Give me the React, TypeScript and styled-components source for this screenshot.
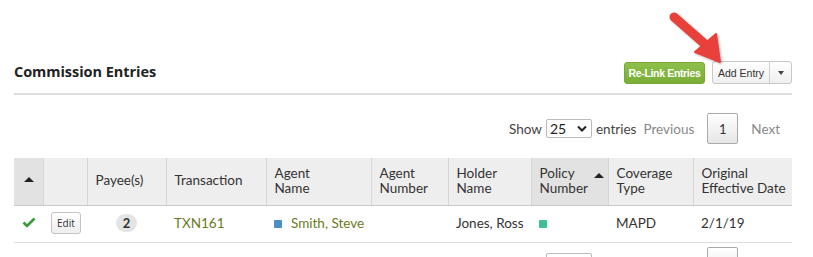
import styled, { createGlobalStyle } from 'styled-components';

const GlobalStyle = createGlobalStyle`
  html, body {
    margin: 0;
    padding: 0;
    background: #fff;
    font-family: Lato, 'Open Sans', sans-serif;
    color: #333;
    overflow: hidden;
  }
`;

const COLUMNS = [
  { key: 'status', label: '', width: 29, sorted: true, arrow: 'center' },
  { key: 'edit', label: '', width: 44 },
  { key: 'payee', label: 'Payee(s)', width: 79 },
  { key: 'txn', label: 'Transaction', width: 100 },
  { key: 'agentName', label: 'Agent\nName', width: 105 },
  { key: 'agentNum', label: 'Agent\nNumber', width: 77 },
  { key: 'holder', label: 'Holder\nName', width: 83 },
  { key: 'policy', label: 'Policy\nNumber', width: 77, sorted: true, arrow: 'right' },
  { key: 'coverage', label: 'Coverage\nType', width: 85 },
  { key: 'date', label: 'Original\nEffective Date', width: 99 },
];

const Page = styled.div`
  position: relative;
  width: 778px;
  padding: 61px 0 0 14px;
  height: 196px;
`;

const Header = styled.div`
  display: flex;
  align-items: center;
  justify-content: space-between;
  padding-bottom: 9px;
  border-bottom: 2px solid #ddd;
`;

const Title = styled.h2`
  margin: 0 0 2px;
  font-family: 'Open Sans', sans-serif;
  font-size: 14.5px;
  font-weight: 700;
  color: #222;
  letter-spacing: -0.05px;
`;

const Actions = styled.div`
  display: flex;
  align-items: center;
  gap: 7px;
`;

const GreenButton = styled.button`
  width: 81px;
  height: 22px;
  padding: 0;
  border: 1px solid #76a832;
  border-radius: 3px;
  background: linear-gradient(#8dbf4a, #7aae37);
  color: #fff;
  font-family: 'Liberation Sans', Arial, sans-serif;
  font-size: 10.5px;
  font-weight: 700;
  letter-spacing: -0.35px;
`;

const SplitButton = styled.div`
  display: flex;
  height: 23px;
  border: 1px solid #c8c8c8;
  border-radius: 3px;
  background: linear-gradient(#fff, #f0f0f0);
  box-sizing: border-box;
`;

const SplitMain = styled.button`
  width: 57px;
  border: 0;
  background: transparent;
  padding: 0;
  font-family: 'Liberation Sans', Arial, sans-serif;
  font-size: 10.5px;
  color: #333;
  border-right: 1px solid #d0d0d0;
`;

const SplitCaret = styled.button`
  width: 21px;
  border: 0;
  background: transparent;
  display: flex;
  align-items: center;
  justify-content: center;
  padding: 0;
`;

const Caret = styled.span`
  width: 0;
  height: 0;
  border-left: 3.5px solid transparent;
  border-right: 3.5px solid transparent;
  border-top: 4px solid #444;
`;

const Pager = styled.div<{ $top: number }>`
  display: flex;
  align-items: center;
  justify-content: flex-end;
  margin-top: ${p => p.$top}px;
  padding-right: 12px;
  font-family: Lato, sans-serif;
  font-size: 13.5px;
  color: #555;
  height: 31px;
`;

const LengthLabel = styled.label`
  display: flex;
  align-items: center;
  gap: 4px;
  margin-right: 7px;
  color: #444;
`;

const Select = styled.div`
  display: flex;
  align-items: center;
  justify-content: space-between;
  width: 46px;
  height: 19px;
  box-sizing: border-box;
  padding: 0 4px 0 3px;
  border: 1px solid #bbb;
  border-radius: 2px;
  font-size: 14px;
  color: #222;
`;

const PageLink = styled.span`
  color: #888;
  font-size: 13.5px;
`;

const PageBox = styled.span`
  display: flex;
  align-items: center;
  justify-content: center;
  width: 31px;
  height: 31px;
  box-sizing: border-box;
  margin: 0 13px 0 13px;
  border: 1px solid #aaa;
  border-radius: 2px;
  background: linear-gradient(#fff, #e6e6e6);
  color: #333;
  font-size: 13px;
`;

const Table = styled.table`
  border-collapse: collapse;
  table-layout: fixed;
  width: 778px;
  margin-top: 14px;
  font-family: Lato, 'Open Sans', sans-serif;
  font-size: 13.5px;
`;

const Th = styled.th<{ $sorted?: boolean }>`
  position: relative;
  height: 45px;
  padding: 0 2px 2px 8px;
  text-align: left;
  vertical-align: middle;
  font-weight: 400;
  line-height: 15px;
  color: #333;
  white-space: pre;
  overflow: hidden;
  background: ${p => (p.$sorted ? '#e2e2e2' : '#eeeeee')};
  border-left: 1px solid #d6d6d6;
  border-bottom: 1px solid #c8c8c8;
  &:first-child {
    border-left: 0;
  }
`;

const SortArrow = styled.span<{ $align: string }>`
  position: absolute;
  top: ${p => (p.$align === 'center' ? '19px' : '15px')};
  ${p => (p.$align === 'center' ? 'left: 10px;' : 'right: 4px;')}
  width: 0;
  height: 0;
  border-left: 5px solid transparent;
  border-right: 5px solid transparent;
  border-bottom: 5px solid #222;
`;

const Td = styled.td<{ $center?: boolean }>`
  height: 33px;
  padding: 0 8px 3px;
  text-align: ${p => (p.$center ? 'center' : 'left')};
  border-bottom: 1px solid #ddd;
  color: #333;
  white-space: nowrap;
`;

const EditButton = styled.button`
  height: 22px;
  padding: 0 5px;
  border: 1px solid #c4c4c4;
  border-radius: 3px;
  background: linear-gradient(#fff, #eee);
  font-family: 'Open Sans', sans-serif;
  font-size: 10px;
  color: #333;
`;

const Badge = styled.span`
  display: inline-flex;
  align-items: center;
  justify-content: center;
  width: 21px;
  height: 18px;
  border-radius: 9px;
  background: #e4e4e4;
  font-weight: 700;
  font-size: 13px;
  color: #333;
`;

const LinkText = styled.span`
  color: #6a7a22;
`;

const Swatch = styled.span<{ $color: string }>`
  display: inline-block;
  width: 8px;
  height: 8px;
  margin-right: 9px;
  border-radius: 1px;
  background: ${p => p.$color};
  vertical-align: 0;
`;

const Callout = styled.svg`
  position: absolute;
  left: 660px;
  top: 7px;
  pointer-events: none;
`;

const PagerRow = ({ top }: { top: number }) => (
  <Pager $top={top}>
    <LengthLabel>
      Show
      <Select>
        25
        <svg width="10" height="7" viewBox="0 0 10 7">
          <path d="M1 1.5 L5 5.5 L9 1.5" stroke="#222" strokeWidth="2" fill="none" />
        </svg>
      </Select>
      entries
    </LengthLabel>
    <PageLink>Previous</PageLink>
    <PageBox>1</PageBox>
    <PageLink>Next</PageLink>
  </Pager>
);

export default function App() {
  return (
    <Page>
      <GlobalStyle />
      <Header>
        <Title>Commission Entries</Title>
        <Actions>
          <GreenButton>Re-Link Entries</GreenButton>
          <SplitButton>
            <SplitMain>Add Entry</SplitMain>
            <SplitCaret>
              <Caret />
            </SplitCaret>
          </SplitButton>
        </Actions>
      </Header>

      <PagerRow top={18} />

      <Table>
        <colgroup>
          {COLUMNS.map(c => (
            <col key={c.key} style={{ width: c.width }} />
          ))}
        </colgroup>
        <thead>
          <tr>
            {COLUMNS.map(c => (
              <Th key={c.key} $sorted={c.sorted}>
                {c.label}
                {c.arrow && <SortArrow $align={c.arrow} />}
              </Th>
            ))}
          </tr>
        </thead>
        <tbody>
          <tr>
            <Td $center>
              <svg width="14" height="11" viewBox="0 0 14 11">
                <path d="M1.5 5.5 L5 9 L12.5 1.5" stroke="#3a9a3a" strokeWidth="2.6" fill="none" />
              </svg>
            </Td>
            <Td>
              <EditButton>Edit</EditButton>
            </Td>
            <Td $center>
              <Badge>2</Badge>
            </Td>
            <Td>
              <LinkText>TXN161</LinkText>
            </Td>
            <Td>
              <Swatch $color="#4a90c8" />
              <LinkText>Smith, Steve</LinkText>
            </Td>
            <Td />
            <Td>Jones, Ross</Td>
            <Td>
              <Swatch $color="#3fbf96" />
            </Td>
            <Td>MAPD</Td>
            <Td>2/1/19</Td>
          </tr>
        </tbody>
      </Table>

      <PagerRow top={4} />

      <Callout width="80" height="62" viewBox="0 0 80 62">
        <defs>
          <filter id="sh" x="-20%" y="-20%" width="140%" height="140%">
            <feDropShadow dx="1" dy="1" stdDeviation="1.2" floodColor="#000" floodOpacity="0.3" />
          </filter>
        </defs>
        <g filter="url(#sh)">
          <path d="M14 10 L46 38" stroke="#e8403a" strokeWidth="9" strokeLinecap="round" />
          <path d="M35 45 L56 27 L60 55 Z" fill="#e8403a" stroke="#e8403a" strokeWidth="2" strokeLinejoin="round" />
        </g>
      </Callout>
    </Page>
  );
}
